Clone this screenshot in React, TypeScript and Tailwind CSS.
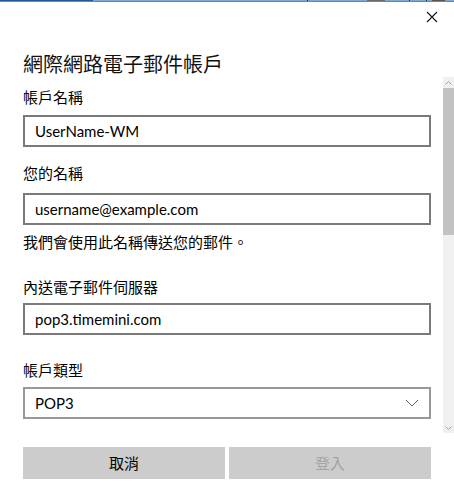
import React from "react";

const font = { fontFamily: '"Noto Sans", "Noto Sans CJK TC", sans-serif' };
const latin = { fontFamily: 'Lato, "Noto Sans CJK TC", sans-serif' };

function Field({ value }: { value: string }) {
  return (
    <div className="h-[32px] w-[408px] border-2 border-[#7a7a7a] bg-white flex items-center pl-[10px] text-[15px] text-black" style={latin}>
      {value}
    </div>
  );
}

export default function App() {
  return (
    <div className="relative w-[454px] h-[489px] overflow-hidden bg-white text-black" style={font}>
      {/* top strip */}
      <div className="flex h-[1px] w-full">
        <div className="w-[93px] bg-[#1f5a96]" />
        <div className="w-[214px] bg-[#7aa8d4]" />
        <div className="w-[1px] bg-[#202020]" />
        <div className="w-[59px] bg-[#7aa8d4]" />
        <div className="w-[18px] bg-[#6b6b6b]" />
        <div className="w-[24px] bg-[#7aa8d4]" />
        <div className="w-[1px] bg-[#303030]" />
        <div className="w-[16px] bg-[#7aa8d4]" />
        <div className="w-[1px] bg-[#303030]" />
        <div className="w-[5px] bg-[#7aa8d4]" />
        <div className="w-[13px] bg-[#555555]" />
        <div className="flex-1 bg-[#7aa8d4]" />
      </div>
      <div className="h-[1px] w-full bg-[#4d8fcc]" />

      {/* close button */}
      <div className="absolute left-[426px] top-[11px] w-[12px] h-[12px]">
        <svg width="12" height="12" viewBox="0 0 12 12">
          <path d="M1 1 L11 11 M11 1 L1 11" stroke="#111" strokeWidth="1.1" fill="none" />
        </svg>
      </div>

      <div className="flex flex-col pl-[23px]">
        <div className="mt-[48px] h-[30px] leading-[30px] text-[20px] text-[#111]">網際網路電子郵件帳戶</div>
        <div className="mt-[6px] h-[22px] leading-[22px] text-[15px]">帳戶名稱</div>
        <div className="mt-[7px]"><Field value="UserName-WM" /></div>
        <div className="mt-[15px] h-[22px] leading-[22px] text-[15px]">您的名稱</div>
        <div className="mt-[9px]"><Field value="username@example.com" /></div>
        <div className="mt-[6px] h-[22px] leading-[22px] text-[15px]">我們會使用此名稱傳送您的郵件。</div>
        <div className="mt-[23px] h-[22px] leading-[22px] text-[15px]">內送電子郵件伺服器</div>
        <div className="mt-[5px]"><Field value="pop3.timemini.com" /></div>
        <div className="mt-[24px] h-[22px] leading-[22px] text-[15px]">帳戶類型</div>
        <div className="mt-[6px] h-[32px] w-[408px] border-2 border-[#999999] bg-white flex items-center justify-between pl-[10px] pr-[10px] text-[15px]" style={latin}>
          <span>POP3</span>
          <svg width="14" height="8" viewBox="0 0 14 8">
            <path d="M1 1 L7 7 L13 1" stroke="#666" strokeWidth="1" fill="none" />
          </svg>
        </div>
        <div className="mt-[28px] flex gap-[4px] w-[408px]">
          <div className="h-[32px] flex-1 bg-[#cccccc] flex items-center justify-center text-[15px] text-black">取消</div>
          <div className="h-[32px] flex-1 bg-[#cccccc] flex items-center justify-center text-[15px] text-[#a3a3a3]">登入</div>
        </div>
      </div>

      {/* scrollbar */}
      <div className="absolute left-[443px] top-[77px] w-[11px] h-[356px] bg-[#f0f0f0] flex flex-col">
        <div className="h-[11px] flex items-center justify-center">
          <svg width="7" height="4" viewBox="0 0 7 4">
            <path d="M0.5 3.5 L3.5 0.5 L6.5 3.5" stroke="#a0a0a0" strokeWidth="1" fill="none" />
          </svg>
        </div>
        <div className="h-[147px] bg-[#c2c2c2]" />
        <div className="flex-1" />
        <div className="h-[11px] flex items-center justify-center">
          <svg width="7" height="4" viewBox="0 0 7 4">
            <path d="M0.5 0.5 L3.5 3.5 L6.5 0.5" stroke="#a0a0a0" strokeWidth="1" fill="none" />
          </svg>
        </div>
      </div>
    </div>
  );
}
